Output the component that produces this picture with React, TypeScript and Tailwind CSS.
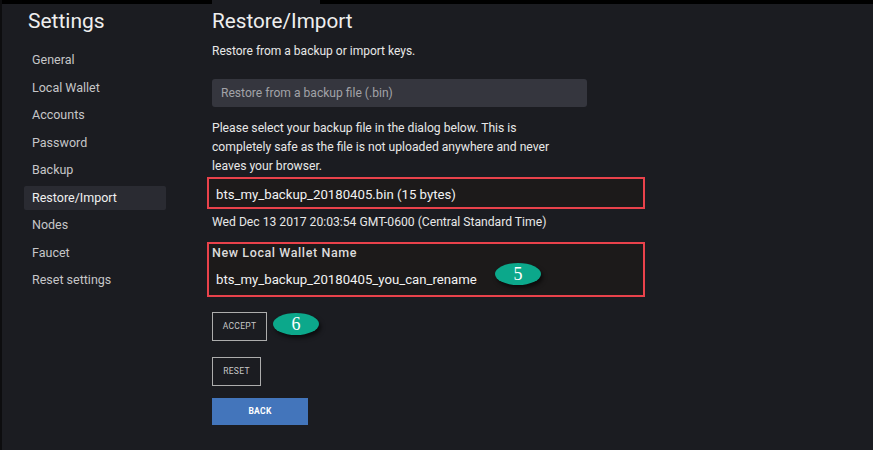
import React from "react";

const menu = [
  "General",
  "Local Wallet",
  "Accounts",
  "Password",
  "Backup",
  "Restore/Import",
  "Nodes",
  "Faucet",
  "Reset settings",
];

function Badge({ n }: { n: string }) {
  return (
    <div
      className="absolute w-[46px] h-[22px] rounded-[50%] bg-[#0ca88b] shadow-[2px_3px_4px_rgba(0,0,0,0.6)] flex items-center justify-center text-white text-[18px] leading-none"
      style={{ fontFamily: '"Liberation Serif", serif' }}
    >
      {n}
    </div>
  );
}

export default function App() {
  return (
    <div
      className="w-[873px] h-[450px] bg-[#1b1c21] border-l-2 border-[#0d0d0f] flex flex-col overflow-hidden"
      style={{ fontFamily: 'Roboto, "Liberation Sans", sans-serif' }}
    >
      {/* top strip */}
      <div className="flex h-[4px] shrink-0">
        <div className="w-[210px] bg-black" />
        <div className="w-[108px]" />
        <div className="flex-1 bg-black" />
      </div>

      <div className="flex flex-1">
        {/* sidebar */}
        <aside className="w-[210px] shrink-0 pl-[22px] pt-[5px]">
          <h1 className="text-[21px] leading-[24px] text-[#eeeeee] pl-[4px]">Settings</h1>
          <ul className="mt-[15px] flex flex-col gap-[3.5px] w-[142px]">
            {menu.map((m) => (
              <li
                key={m}
                className={
                  m === "Restore/Import"
                    ? "h-[24px] leading-[24px] px-[8px] text-[12.5px] text-[#f0f0f0] bg-[#2a2b32] rounded-[2px]"
                    : "h-[24px] leading-[24px] px-[8px] text-[12.5px] text-[#c6c6c8]"
                }
              >
                {m}
              </li>
            ))}
          </ul>
        </aside>

        {/* main */}
        <main className="flex-1 pt-[5px] flex flex-col items-start text-[#e8e8e8]">
          <h2 className="text-[20.7px] leading-[24px] text-[#eeeeee]">Restore/Import</h2>
          <p className="mt-[10px] text-[12px] leading-[16px]">Restore from a backup or import keys.</p>

          <div className="mt-[20px] w-[375px] h-[28px] rounded-[3px] bg-[#35363e] flex items-center pl-[9px] text-[12.1px] text-[#a2a3a8]">
            Restore from a backup file (.bin)
          </div>

          <p className="mt-[12px] text-[12.15px] leading-[19px]">
            Please select your backup file in the dialog below. This is
            <br />
            completely safe as the file is not uploaded anywhere and never
            <br />
            leaves your browser.
          </p>

          <div className="-ml-[5px] mt-[1px] w-[438px] h-[32px] border-2 border-[#e9424b] bg-[#1c1a1a] flex items-center pl-[7px] pt-[3px] text-[13.2px] text-[#f2f2f2]">
            bts_my_backup_20180405.bin (15 bytes)
          </div>

          <p className="mt-[5px] text-[12.15px] leading-[16px]">
            Wed Dec 13 2017 20:03:54 GMT-0600 (Central Standard Time)
          </p>

          <div className="relative -ml-[5px] mt-[12px] w-[438px] h-[55px] border-2 border-[#e9424b] bg-[#1c1a1a] pl-[3px] pt-[1px]">
            <div className="text-[12.5px] leading-[16px] font-medium text-[#dcdcdc] tracking-[0.6px]">
              New Local Wallet Name
            </div>
            <div className="mt-[9px] pl-[4px] text-[13.2px] leading-[20px] text-[#f2f2f2]">
              bts_my_backup_20180405_you_can_rename
            </div>
            <div className="absolute left-[286px] top-[19px]">
              <Badge n="5" />
            </div>
          </div>

          <div className="relative mt-[15px]">
            <button className="w-[55px] h-[29px] border border-[#adadad] text-[8.5px] tracking-[0.3px] text-[#c8c8c8] flex items-center justify-center">
              ACCEPT
            </button>
            <div className="absolute left-[61px] top-[1px]">
              <Badge n="6" />
            </div>
          </div>

          <button className="mt-[16px] w-[49px] h-[29px] border border-[#adadad] text-[8.5px] tracking-[0.3px] text-[#c8c8c8] flex items-center justify-center">
            RESET
          </button>

          <button className="mt-[12px] w-[96px] h-[27px] bg-[#4375bb] text-[8.5px] font-bold tracking-[0.3px] text-white flex items-center justify-center">
            BACK
          </button>
        </main>
      </div>
    </div>
  );
}
